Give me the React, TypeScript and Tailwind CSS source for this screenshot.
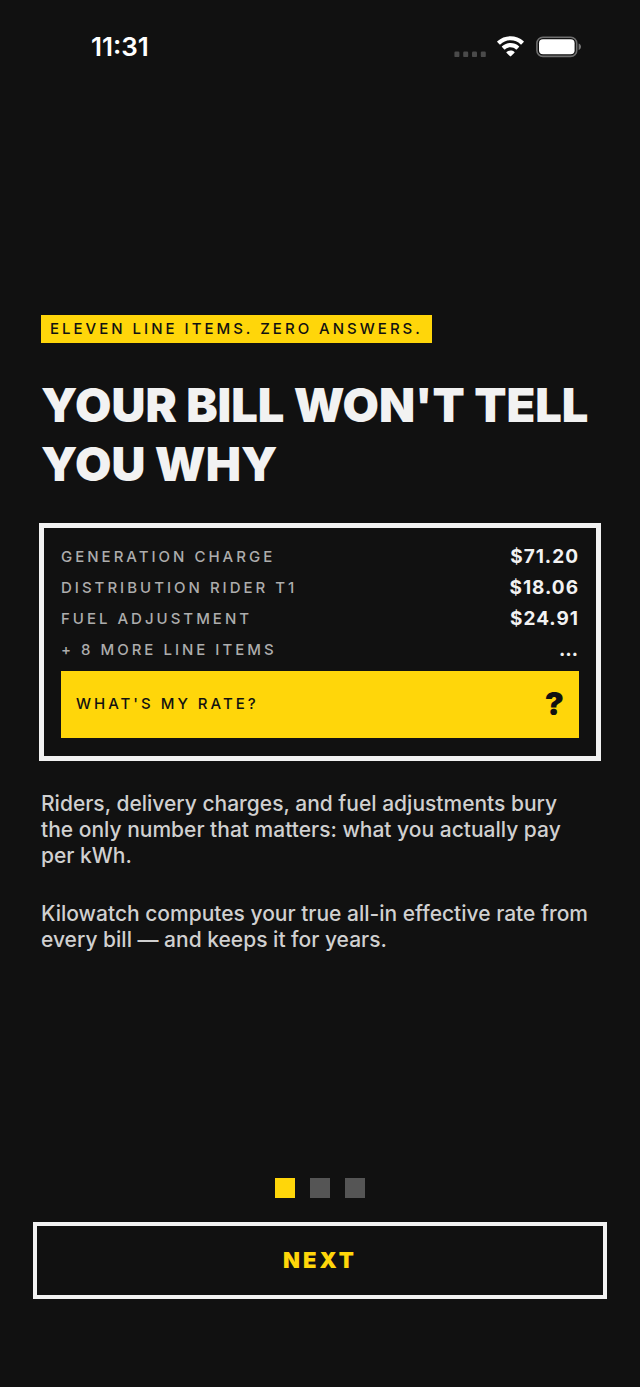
import { useState } from "react";

const lineItems = [
    { label: "Generation charge", amount: "$71.20" },
    { label: "Distribution rider T1", amount: "$18.06" },
    { label: "Fuel adjustment", amount: "$24.91" },
    { label: "+ 8 more line items", amount: "…" },
];

const pages = [1, 2, 3];

function StatusBar() {
    return (
        <header className="flex items-center justify-between pt-[31px] pr-[58px] pl-[91px] text-white">
            <time className="text-[26px] leading-8 font-semibold">11:31</time>

            <div className="flex items-center gap-2.5">
                {/* no cellular signal */}
                <svg width="32" height="22" viewBox="0 0 32 22" fill="#4a4a4a" aria-hidden="true">
                    <rect x="0.4" y="15.5" width="5" height="5.6" rx="1.2" />
                    <rect x="9.2" y="15.5" width="5" height="5.6" rx="1.2" />
                    <rect x="18" y="15.5" width="5" height="5.6" rx="1.2" />
                    <rect x="26.8" y="15.5" width="5" height="5.6" rx="1.2" />
                </svg>

                <svg width="30" height="22" viewBox="0 0 30 22" fill="currentColor" aria-label="Wi-Fi">
                    <path d="M14.5 4.3c3.9 0 7.5 1.5 10.2 4.1.2.2.5.2.7 0l2.3-2.3c.2-.2.2-.6 0-.8-7.4-6.8-19-6.8-26.4 0-.2.2-.2.6 0 .8l2.3 2.3c.2.2.5.2.7 0 2.7-2.6 6.3-4.1 10.2-4.1z" />
                    <path d="M14.5 11.3c2.1 0 4 .8 5.5 2.1.2.2.5.2.7 0l2.3-2.3c.2-.2.2-.6 0-.8-4.8-4.4-12.2-4.4-17 0-.2.2-.2.6 0 .8l2.3 2.3c.2.2.5.2.7 0 1.5-1.3 3.4-2.1 5.5-2.1z" />
                    <path d="M18.5 16.7c.2-.2.2-.6 0-.8-2.3-1.9-5.7-1.9-8 0-.2.2-.2.6 0 .8l3.6 3.6c.2.2.6.2.8 0z" />
                </svg>

                <svg width="46" height="22" viewBox="0 0 46 22" aria-label="Battery full">
                    <rect x="0.9" y="1.2" width="39.8" height="19.2" rx="6" fill="none" stroke="#6f6f6f" strokeWidth="1.6" />
                    <rect x="3" y="3.3" width="35.6" height="15" rx="4" fill="#fff" />
                    <path d="M42.6 7.5c1.5.5 2.4 1.8 2.4 3.3s-.9 2.8-2.4 3.3z" fill="#777" />
                </svg>
            </div>
        </header>
    );
}

function BillCard() {
    return (
        <section className="-mx-0.5 border-[5px] border-[#f2f2f2] px-[17px] pt-3.5 pb-[18px]">
            <table className="w-full uppercase">
                <tbody>
                    {lineItems.map((item) => (
                        <tr key={item.label} className="h-[31px]">
                            <th scope="row" className="text-left text-[15px] leading-6 font-medium tracking-[3px] text-[#adadad]">
                                {item.label}
                            </th>
                            <td className="text-right text-[19px] leading-6 font-bold tracking-[1px] text-[#f2f2f2]">
                                {item.amount}
                            </td>
                        </tr>
                    ))}
                </tbody>
            </table>

            <div className="mt-[5px] flex h-[67px] items-center justify-between bg-[#ffd60a] px-[15px] text-[#111]">
                <span className="text-[15px] font-medium tracking-[3px] uppercase">What's my rate?</span>
                <span className="text-[32px] font-black">?</span>
            </div>
        </section>
    );
}

export default function App() {
    const [page, setPage] = useState(1);

    return (
        <div className="flex min-h-screen flex-col bg-[#111] font-['Inter',sans-serif]">
            <StatusBar />

            <main className="flex flex-1 flex-col justify-center px-[41px] pt-[26px]">
                <p className="self-start bg-[#ffd60a] px-[9px] py-0.5 text-[15px] leading-6 font-medium tracking-[3px] text-[#111] uppercase">
                    Eleven line items. Zero answers.
                </p>

                <h1 className="mt-8 mb-[30px] text-[47px] leading-[59px] font-black text-[#f2f2f2] uppercase">
                    Your bill won't tell you why
                </h1>

                <BillCard />

                <div className="mt-[30px] flex flex-col gap-8 pr-2 text-[21px] leading-[26px] font-medium text-[#d0d0d0]">
                    <p>
                        Riders, delivery charges, and fuel adjustments bury the only number that matters: what you
                        actually pay per kWh.
                    </p>
                    <p>Kilowatch computes your true all-in effective rate from every bill — and keeps it for years.</p>
                </div>
            </main>

            <footer className="px-[33px] pb-[88px]">
                <div className="mb-6 flex justify-center gap-[15px]">
                    {pages.map((n) => (
                        <button
                            key={n}
                            type="button"
                            aria-label={`Page ${n}`}
                            onClick={() => setPage(n)}
                            className={`size-5 ${n === page ? "bg-[#ffd60a]" : "bg-[#555]"}`}
                        />
                    ))}
                </div>

                <button
                    type="button"
                    onClick={() => setPage(page < pages.length ? page + 1 : 1)}
                    className="h-[77px] w-full border-4 border-[#f2f2f2] text-[22px] font-black tracking-[3px] text-[#ffd60a] uppercase"
                >
                    Next
                </button>
            </footer>
        </div>
    );
}
